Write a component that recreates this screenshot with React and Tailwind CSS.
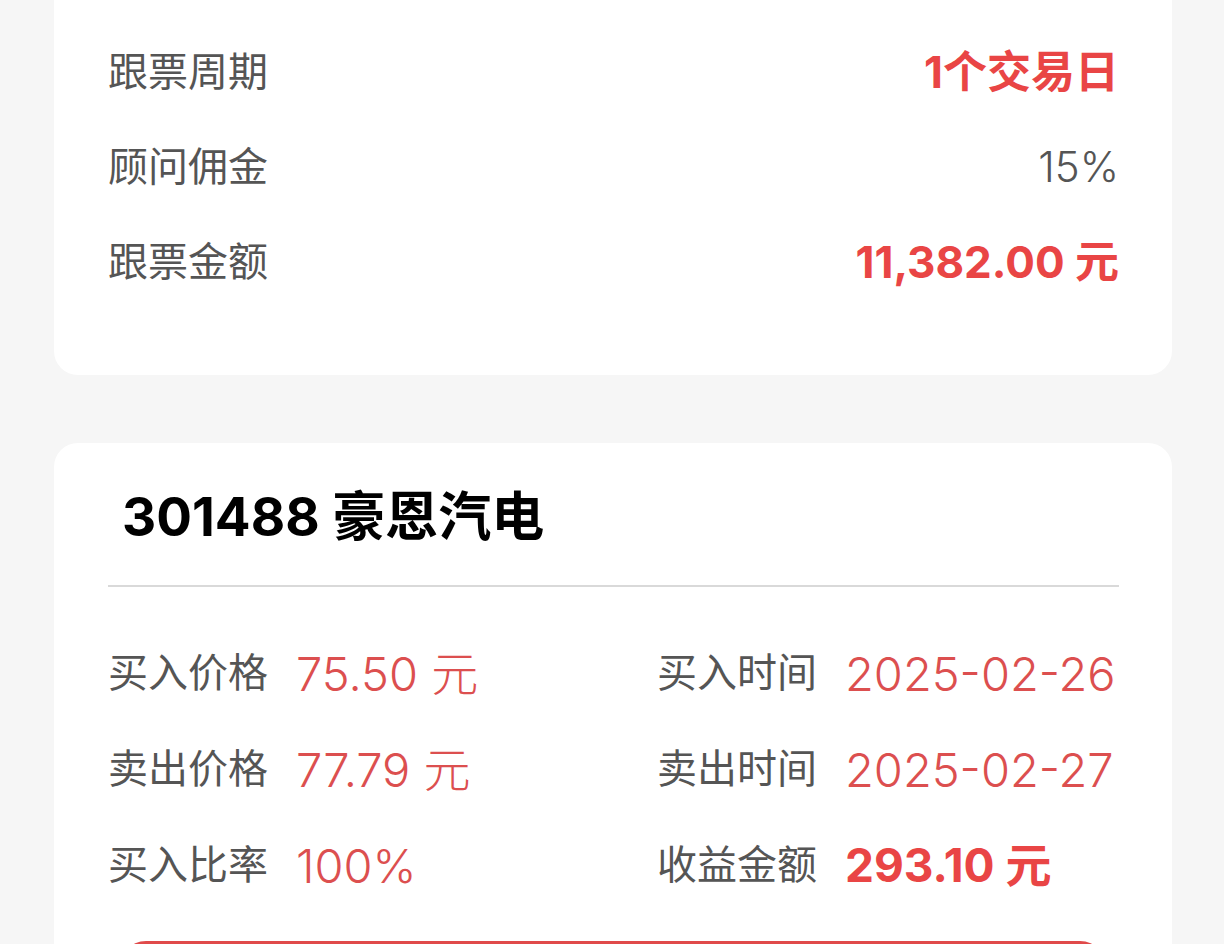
const summary = [
  { label: '跟票周期', value: '1个交易日', tone: 'bold' },
  { label: '顾问佣金', value: '15%', tone: 'plain' },
  { label: '跟票金额', value: '11,382.00 元', tone: 'bold' },
]

const details = [
  [
    { label: '买入价格', value: '75.50 元' },
    { label: '买入时间', value: '2025-02-26' },
  ],
  [
    { label: '卖出价格', value: '77.79 元' },
    { label: '卖出时间', value: '2025-02-27' },
  ],
  [
    { label: '买入比率', value: '100%' },
    { label: '收益金额', value: '293.10 元', strong: true },
  ],
]

export default function App() {
  return (
    <div className="min-h-screen bg-[#f6f6f6] pl-[54px] pr-[52px] font-['Inter','Noto_Sans_CJK_SC',sans-serif] overflow-hidden">
      {/* Order summary */}
      <div className="bg-white rounded-b-[24px] pl-[54px] pr-[53px] pt-[24px] pb-[66px]">
        {summary.map(({ label, value, tone }) => (
          <div key={label} className="flex items-center justify-between h-[95px]">
            <span className="text-[40px] leading-none text-[#555555]">{label}</span>
            <span
              className={
                tone === 'bold'
                  ? 'text-[44px] leading-none font-bold text-[#e94545]'
                  : 'text-[42px] leading-none font-light text-[#555555]'
              }
            >
              {value}
            </span>
          </div>
        ))}
      </div>

      {/* Stock card */}
      <div className="mt-[68px] bg-white rounded-t-[24px] pl-[54px] pr-[53px] pt-[46px]">
        <div className="pl-[14px] h-[56px] flex items-center text-[53px] font-bold text-black leading-none">
          301488 豪恩汽电
        </div>
        <div className="mt-[40px] h-[2px] bg-[#d9d9d9]" />

        <div className="pt-[38px]">
          {details.map((row, i) => (
            <div key={i} className="grid grid-cols-[549px_1fr] h-[96px] items-center">
              {row.map(({ label, value, strong }) => (
                <div key={label} className="flex items-center gap-[28px]">
                  <span className="text-[40px] leading-none text-[#555555] whitespace-nowrap">{label}</span>
                  <span
                    className={
                      strong
                        ? 'text-[46px] leading-none font-bold text-[#e94545] whitespace-nowrap'
                        : 'text-[47px] leading-none font-light text-[#dc4f4f] whitespace-nowrap'
                    }
                  >
                    {value}
                  </span>
                </div>
              ))}
            </div>
          ))}
        </div>

        <button className="mt-[28px] mx-[10px] w-[990px] h-[96px] rounded-[28px] bg-[#e04a4a] text-white text-[40px]">
          &nbsp;
        </button>
      </div>
    </div>
  )
}
